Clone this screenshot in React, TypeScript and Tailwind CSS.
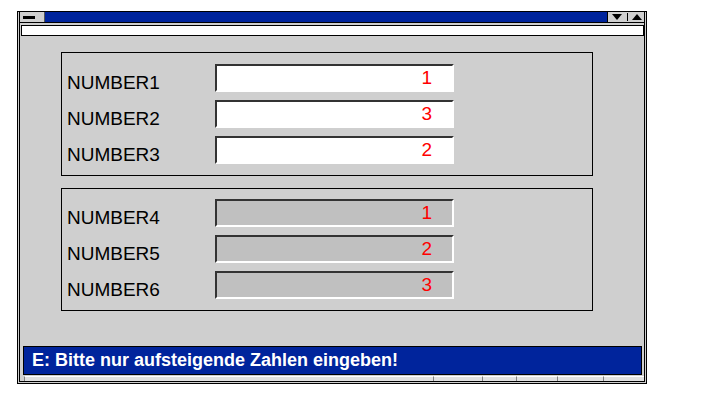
import React from 'react';

interface Field {
  label: string;
  value: string;
}

const editable: Field[] = [
  { label: 'NUMBER1', value: '1' },
  { label: 'NUMBER2', value: '3' },
  { label: 'NUMBER3', value: '2' },
];

const readonly: Field[] = [
  { label: 'NUMBER4', value: '1' },
  { label: 'NUMBER5', value: '2' },
  { label: 'NUMBER6', value: '3' },
];

// widths of the little panes under the message bar
const panes = [409, 49, 34, 41, 46, 41];

function FieldRow({ field, disabled }: { field: Field; disabled?: boolean }) {
  return (
    <div className="flex h-[28px]">
      <div className="w-[153px] pl-[5px] pt-[9px] text-[19px] leading-[19px] text-black">
        {field.label}
      </div>
      <div
        className={
          'flex h-[28px] w-[239px] items-center justify-end border-t-2 border-l-2 border-b-2 border-r-2 border-t-[#333] border-l-[#333] border-b-white border-r-white pr-[20px] text-[19px] leading-none text-[#ff0000] ' +
          (disabled ? 'bg-[#c0c0c0]' : 'bg-white')
        }
      >
        {field.value}
      </div>
    </div>
  );
}

function Group({ fields, disabled, className }: { fields: Field[]; disabled?: boolean; className: string }) {
  return (
    <div className={'ml-[41px] w-[532px] border border-black pb-[11px] ' + className}>
      <div className="flex flex-col gap-[8px]">
        {fields.map((f) => (
          <FieldRow key={f.label} field={f} disabled={disabled} />
        ))}
      </div>
    </div>
  );
}

export default function App() {
  return (
    <div className="h-[396px] w-[720px] bg-white pl-[17px] pt-[11px] font-['Liberation_Sans',Arial,sans-serif]">
      <div className="h-[373px] w-[630px] border border-black bg-[#cfcfcf] px-px pb-px">
        <div className="flex h-full flex-col border-x border-b border-black">
          {/* Title bar */}
          <div className="flex h-[12px] border-b border-black">
            <div className="flex w-[24px] items-center pl-[3px]">
              <div className="h-[3px] w-[12px] bg-black" />
            </div>
            <div className="flex-1 border-l border-[#555] bg-[#00249c]" />
            <div className="flex w-[37px] items-center border-l border-black pl-[4px]">
              <svg width="10" height="6" viewBox="0 0 10 6">
                <polygon points="0,0 10,0 5,6" fill="#000" />
              </svg>
              <div className="ml-[5px] h-[8px] w-px bg-black" />
              <svg className="ml-[4px]" width="10" height="6" viewBox="0 0 10 6">
                <polygon points="0,6 10,6 5,0" fill="#000" />
              </svg>
            </div>
          </div>

          {/* menu strip */}
          <div className="ml-px mt-[2px] h-[11px] border border-black bg-white" />

          <Group fields={editable} className="mt-[16px] pt-[11px]" />
          <Group fields={readonly} disabled className="mt-[12px] pt-[10px]" />

          {/* message bar */}
          <div className="ml-[3px] mr-[2px] mt-[35px] flex h-[31px] items-center border border-black bg-[#00249c] pl-[8px] text-[18px] font-bold text-white">
            E: Bitte nur aufsteigende Zahlen eingeben!
          </div>
          <div className="ml-[4px] mt-px flex h-[5px]">
            {panes.map((w, i) => (
              <div
                key={i}
                style={{ width: w }}
                className="border-l border-t border-l-[#808080] border-t-white bg-[#e0e0e0]"
              />
            ))}
          </div>
        </div>
      </div>
    </div>
  );
}
